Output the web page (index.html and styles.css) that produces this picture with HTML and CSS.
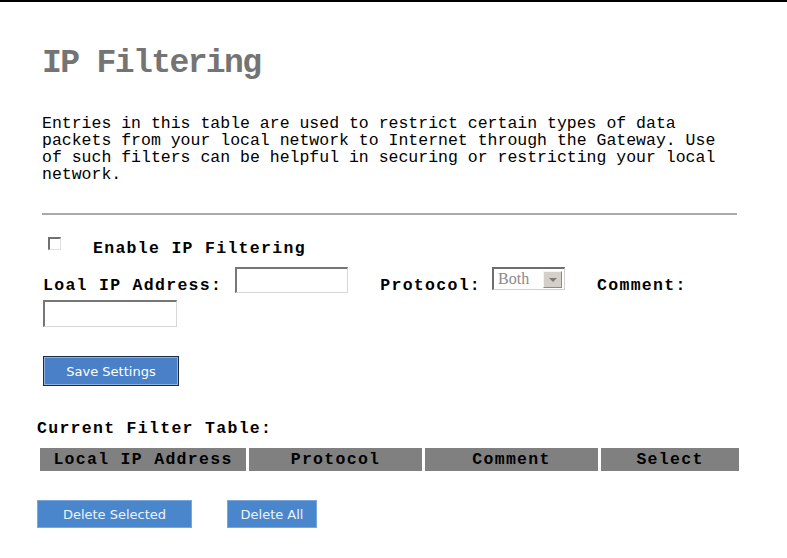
FILE: index.html
```html
<!DOCTYPE html>
<html lang="en">
<head>
    <meta charset="UTF-8">
    <title>IP Filtering</title>
    <link rel="stylesheet" href="styles.css">
</head>
<body>
    <div class="topbar"></div>
    <div class="page">
        <h1 class="title">IP Filtering</h1>
        <p class="intro">Entries in this table are used to restrict certain types of data
packets from your local network to Internet through the Gateway. Use
of such filters can be helpful in securing or restricting your local
network.</p>
        <div class="rule"></div>

        <div class="enable-row">
            <input type="checkbox" class="check">
            <span class="label">Enable IP Filtering</span>
        </div>

        <div class="field-row">
            <span class="label ip-label">Loal IP Address:</span>
            <input type="text" class="text-input ip-input">
            <span class="label proto-label">Protocol:</span>
            <div class="select">
                <span class="select-value">Both</span>
                <span class="select-arrow"></span>
            </div>
            <span class="label comment-label">Comment:</span>
        </div>
        <div class="comment-row">
            <input type="text" class="text-input comment-input">
        </div>

        <button class="btn btn-save">Save Settings</button>

        <div class="label table-title">Current Filter Table:</div>
        <div class="filter-table">
            <div class="th">Local IP Address</div>
            <div class="th">Protocol</div>
            <div class="th">Comment</div>
            <div class="th">Select</div>
        </div>

        <div class="actions">
            <button class="btn btn-light btn-del-sel">Delete Selected</button>
            <button class="btn btn-light btn-del-all">Delete All</button>
        </div>
    </div>
</body>
</html>
```

FILE: styles.css
```css
* {
    box-sizing: border-box;
    margin: 0;
    padding: 0;
}

body {
    background: #fff;
    color: #000;
    font-family: "Liberation Mono", "DejaVu Sans Mono", monospace;
    font-size: 16.5px;
    line-height: 17px;
}

.topbar {
    height: 2px;
    background: #000;
}

.page {
    padding-left: 42px;
}

.title {
    margin-top: 44px;
    font-size: 33px;
    line-height: 36px;
    font-weight: bold;
    letter-spacing: -1.6px;
    color: #747474;
}

.intro {
    margin-top: 33px;
    white-space: pre-line;
}

.rule {
    margin-top: 30px;
    width: 695px;
    height: 2px;
    background: #a9a9a9;
}

.label {
    font-weight: bold;
    letter-spacing: 1.3px;
    white-space: nowrap;
}

.enable-row {
    display: flex;
    align-items: flex-start;
    margin-top: 25px;
    height: 17px;
}

.check {
    appearance: none;
    width: 13px;
    height: 13px;
    margin: -3px 32px 0 6px;
    background: #fff;
    border-style: solid;
    border-width: 2px 1px 1px 2px;
    border-color: #707070 #e0e0e0 #e0e0e0 #707070;
}

.field-row {
    display: flex;
    align-items: flex-start;
    margin-top: 10px;
}

.field-row .label {
    margin-top: 10px;
}

.ip-label {
    margin-left: 1px;
}

.text-input {
    display: block;
    background: #fff;
    border-style: solid;
    border-width: 2px 1px 1px 2px;
    border-color: #767676 #d8d8d8 #d8d8d8 #767676;
    outline: none;
}

.ip-input {
    width: 113px;
    height: 26px;
    margin-left: 13px;
}

.proto-label {
    margin-left: 32px;
}

.select {
    display: flex;
    align-items: center;
    justify-content: space-between;
    width: 73px;
    height: 23px;
    margin-left: 11px;
    padding: 1px 2px 1px 4px;
    background: #fff;
    border-style: solid;
    border-width: 2px 1px 1px 2px;
    border-color: #6e6e6e #d0d0d0 #d0d0d0 #6e6e6e;
}

.select-value {
    color: #8a8a8a;
    font-family: "Liberation Serif", serif;
    font-size: 16px;
    margin-top: -2px;
}

.select-arrow {
    position: relative;
    width: 19px;
    height: 17px;
    background: #d4d0c8;
    border: 1px solid;
    border-color: #f4f4f4 #8a8a8a #8a8a8a #f4f4f4;
}

.select-arrow::after {
    content: "";
    position: absolute;
    left: 5px;
    top: 6px;
    border-left: 4px solid transparent;
    border-right: 4px solid transparent;
    border-top: 4px solid #7a7a7a;
}

.comment-label {
    margin-left: 32px;
}

.comment-row {
    margin-top: 6px;
}

.comment-input {
    width: 134px;
    height: 27px;
    margin-left: 1px;
}

.btn {
    display: block;
    color: #fff;
    font-family: "DejaVu Sans", Verdana, sans-serif;
    font-size: 13px;
    cursor: pointer;
}

.btn-save {
    width: 136px;
    height: 30px;
    margin: 29px 0 0 1px;
    background: #4a80c8;
    border: 1px solid #1d2a45;
    box-shadow: inset 0 0 0 1px #8db2e2;
}

.table-title {
    margin: 34px 0 0 -5px;
}

.filter-table {
    display: grid;
    grid-template-columns: 206px 173px 173px 138px;
    column-gap: 3px;
    margin: 11px 0 0 -2px;
}

.th {
    height: 23px;
    line-height: 23px;
    background: #808080;
    text-align: center;
    font-weight: bold;
    letter-spacing: 1.3px;
}

.actions {
    display: flex;
    gap: 35px;
    margin: 29px 0 0 -5px;
}

.btn-light {
    height: 28px;
    background: #4a86cb;
    border: 1px solid #7aa6da;
    color: #eef3fb;
}

.btn-del-sel {
    width: 155px;
}

.btn-del-all {
    width: 90px;
}
```
